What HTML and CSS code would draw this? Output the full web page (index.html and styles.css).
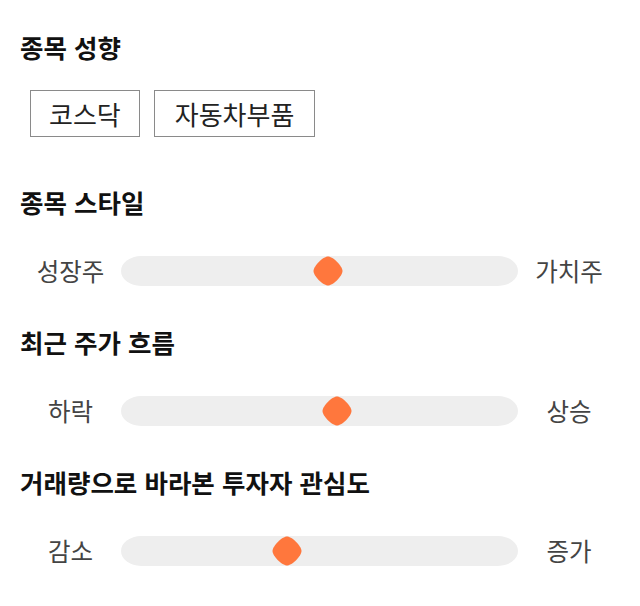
FILE: index.html
```html
<!DOCTYPE html>
<html lang="ko">

<head>
    <meta charset="UTF-8">
    <meta name="viewport" content="width=device-width, initial-scale=1.0">
    <title>종목 분석</title>
    <link rel="stylesheet" href="styles.css">
</head>

<body>
    <div class="container">
        <section class="block">
            <h2>종목 성향</h2>
            <div class="tags">
                <span class="tag">코스닥</span>
                <span class="tag">자동차부품</span>
            </div>
        </section>

        <section class="block">
            <h2>종목 스타일</h2>
            <div class="scale">
                <span class="scale-label">성장주</span>
                <div class="track">
                    <svg class="thumb" style="left: 52.1%;" width="30" height="30" viewBox="0 0 30 30">
                        <path d="M15 0.5C20 0.5 29.5 10 29.5 15C29.5 20 20 29.5 15 29.5C10 29.5 0.5 20 0.5 15C0.5 10 10 0.5 15 0.5Z" />
                    </svg>
                </div>
                <span class="scale-label">가치주</span>
            </div>
        </section>

        <section class="block">
            <h2>최근 주가 흐름</h2>
            <div class="scale">
                <span class="scale-label">하락</span>
                <div class="track">
                    <svg class="thumb" style="left: 54.3%;" width="30" height="30" viewBox="0 0 30 30">
                        <path d="M15 0.5C20 0.5 29.5 10 29.5 15C29.5 20 20 29.5 15 29.5C10 29.5 0.5 20 0.5 15C0.5 10 10 0.5 15 0.5Z" />
                    </svg>
                </div>
                <span class="scale-label">상승</span>
            </div>
        </section>

        <section class="block">
            <h2>거래량으로 바라본 투자자 관심도</h2>
            <div class="scale">
                <span class="scale-label">감소</span>
                <div class="track">
                    <svg class="thumb" style="left: 41.7%;" width="30" height="30" viewBox="0 0 30 30">
                        <path d="M15 0.5C20 0.5 29.5 10 29.5 15C29.5 20 20 29.5 15 29.5C10 29.5 0.5 20 0.5 15C0.5 10 10 0.5 15 0.5Z" />
                    </svg>
                </div>
                <span class="scale-label">증가</span>
            </div>
        </section>
    </div>
</body>

</html>
```

FILE: styles.css
```css
* {
    margin: 0;
    padding: 0;
    box-sizing: border-box;
}

body {
    background-color: #fff;
    font-family: "Noto Sans CJK KR", "Noto Sans", sans-serif;
    color: #222;
}

.container {
    padding: 32px 20px 0;
}

.block {
    margin-bottom: 41px;
}

.block h2 {
    font-size: 25.5px;
    font-weight: bold;
    line-height: 30px;
    color: #111;
}

/* chips */
.tags {
    display: flex;
    gap: 14px;
    margin-top: 28px;
    padding-left: 10px;
}

.tag {
    display: inline-block;
    height: 47px;
    line-height: 45px;
    padding: 0 18px;
    border: 1px solid #8a8a8a;
    font-size: 26px;
    color: #222;
}

.tag + .tag {
    padding: 0 20px;
}

.block:first-child {
    margin-bottom: 50px;
}

/* sliders */
.scale {
    display: grid;
    grid-template-columns: 101px 1fr 102px;
    align-items: center;
    margin-top: 39px;
}

.scale-label {
    text-align: center;
    font-size: 24.5px;
    line-height: 30px;
    color: #444;
}

.track {
    position: relative;
    height: 30px;
    background-color: #eeeeee;
    border-radius: 20px / 15px;
}

.thumb {
    position: absolute;
    top: 50%;
    transform: translate(-50%, -50%);
    fill: #ff773d;
}
```
